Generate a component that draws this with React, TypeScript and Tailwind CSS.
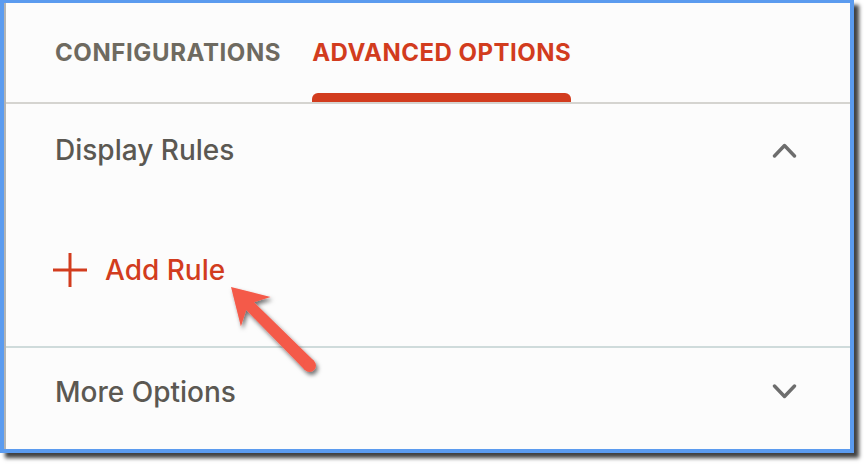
import React from "react";

function Chevron({ up }: { up?: boolean }) {
  return (
    <svg width="25" height="16" viewBox="0 0 25 16" className="block">
      <path
        d={up ? "M2.5 14 L12.5 3.5 L22.5 14" : "M2.5 2 L12.5 12.5 L22.5 2"}
        fill="none"
        stroke="#6d6d6d"
        strokeWidth="3.4"
        strokeLinecap="round"
        strokeLinejoin="round"
      />
    </svg>
  );
}

function PlusIcon() {
  return (
    <svg width="34" height="34" viewBox="0 0 34 34" className="block">
      <path d="M17 0 V34 M0 17 H34" stroke="#d23c1e" strokeWidth="3" />
    </svg>
  );
}

function Arrow() {
  // annotation arrow drawn over the screenshot
  return (
    <svg
      width="864"
      height="464"
      viewBox="0 0 864 464"
      className="absolute left-0 top-0 pointer-events-none"
    >
      <defs>
        <filter id="arrowShadow" x="-20%" y="-20%" width="150%" height="150%">
          <feDropShadow dx="2" dy="3" stdDeviation="2" floodColor="#000" floodOpacity="0.55" />
        </filter>
      </defs>
      <g filter="url(#arrowShadow)" fill="#f45a49">
        <polygon points="231,287 270.6,296.9 254,302.2 314.1,360.9 304.9,370.1 246.2,310 240.9,326.6" />
        <circle cx="309.5" cy="365.5" r="6.5" />
      </g>
    </svg>
  );
}

export default function App() {
  return (
    <div
      className="relative w-[864px] h-[464px] bg-white overflow-hidden"
      style={{ fontFamily: "Inter, 'Liberation Sans', sans-serif" }}
    >
      <div className="w-[854px] h-[453px] border-l-4 border-t-[3px] border-r-4 border-b-4 border-[#5b9bef] shadow-[5px_5px_4px_rgba(0,0,0,0.75)] flex">
        <div className="w-[2px] bg-[#b4b4b4]" />
        <div className="flex-1 flex flex-col bg-[#fcfcfc]">
          {/* Tabs */}
          <div className="h-[99px] flex items-end gap-[31px] pl-[49px]">
            <div className="flex flex-col">
              <span className="text-[24px] leading-none font-bold tracking-[0.6px] text-[#6e6a60]">
                CONFIGURATIONS
              </span>
              <div className="h-[9px] mt-[28px]" />
            </div>
            <div className="flex flex-col">
              <span className="text-[24px] leading-none font-bold tracking-[0.5px] text-[#d23c1e]">
                ADVANCED OPTIONS
              </span>
              <div className="h-[9px] mt-[28px] rounded-t-[6px] bg-[#d23c1e]" />
            </div>
          </div>
          <div className="h-[2px] bg-[#d5d4d0]" />

          {/* Display Rules */}
          <div className="h-[242px] flex flex-col">
            <div className="h-[92px] flex items-center justify-between pl-[49px] pr-[53px]">
              <span className="text-[28px] leading-none font-medium text-[#5b5852]">Display Rules</span>
              <Chevron up />
            </div>
            <div className="mt-[57px] flex items-center gap-[18px] pl-[47px]">
              <PlusIcon />
              <span className="text-[28px] leading-none font-medium text-[#d23c1e]">Add Rule</span>
            </div>
          </div>
          <div className="h-[2px] bg-[#cfdbdb]" />

          {/* More Options */}
          <div className="h-[88px] flex items-center justify-between pl-[49px] pr-[53px]">
            <span className="text-[28px] leading-none font-medium text-[#5b5852]">More Options</span>
            <Chevron />
          </div>
        </div>
      </div>
      <Arrow />
    </div>
  );
}
